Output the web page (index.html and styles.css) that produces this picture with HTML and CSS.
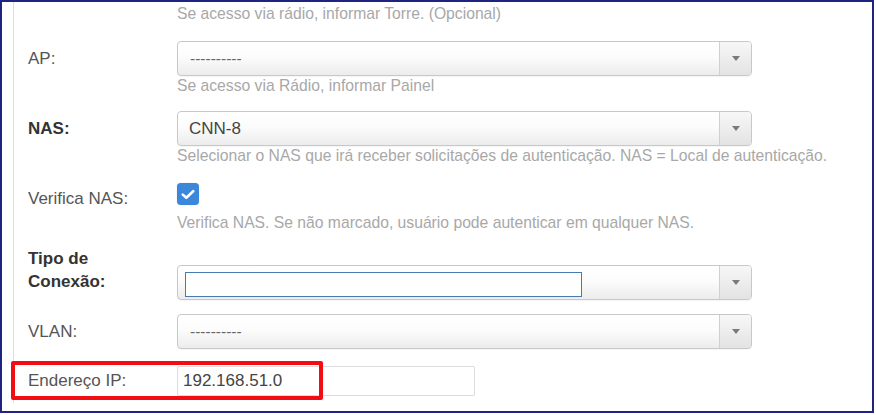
FILE: index.html
```html
<!DOCTYPE html>
<html lang="pt-BR">
<head>
<meta charset="utf-8">
<title>Formulário</title>
<link rel="stylesheet" href="styles.css">
</head>
<body>
<div class="frame">
  <div class="panel">
    <div class="field field-top">
      <div class="lbl"></div>
      <div class="ctl"><div class="help">Se acesso via rádio, informar Torre. (Opcional)</div></div>
    </div>

    <div class="field field-ap">
      <div class="lbl">AP:</div>
      <div class="ctl">
        <div class="select"><span class="select-text dashes">----------</span><span class="select-arrow"></span></div>
        <div class="help">Se acesso via Rádio, informar Painel</div>
      </div>
    </div>

    <div class="field field-nas">
      <div class="lbl bold">NAS:</div>
      <div class="ctl">
        <div class="select"><span class="select-text">CNN-8</span><span class="select-arrow"></span></div>
        <div class="help">Selecionar o NAS que irá receber solicitações de autenticação. NAS = Local de autenticação.</div>
      </div>
    </div>

    <div class="field field-check">
      <div class="lbl lbl-check">Verifica NAS:</div>
      <div class="ctl">
        <span class="checkbox"><svg width="14" height="11" viewBox="0 0 14 11"><path d="M1.8 5.6 L5.3 8.8 L12.2 2.2" fill="none" stroke="#fff" stroke-width="2.6" stroke-linecap="round" stroke-linejoin="round"/></svg></span>
        <div class="help help-check">Verifica NAS. Se não marcado, usuário pode autenticar em qualquer NAS.</div>
      </div>
    </div>

    <div class="field field-tipo">
      <div class="lbl bold lbl-two">Tipo de<br>Conexão:</div>
      <div class="ctl">
        <div class="select"><span class="inner-input"></span><span class="select-fill"></span><span class="select-arrow"></span></div>
      </div>
    </div>

    <div class="field field-vlan">
      <div class="lbl">VLAN:</div>
      <div class="ctl">
        <div class="select"><span class="select-text dashes">----------</span><span class="select-arrow"></span></div>
      </div>
    </div>

    <div class="field field-ip">
      <div class="lbl lbl-ip">Endereço IP:</div>
      <div class="ctl">
        <div class="text-input">192.168.51.0</div>
      </div>
    </div>
  </div>
  <div class="highlight"></div>
</div>
</body>
</html>
```

FILE: styles.css
```css
html, body {
  margin: 0;
  padding: 0;
  background: #ffffff;
}

body {
  font-family: "Liberation Sans", Arial, sans-serif;
  color: #555;
}

.frame {
  position: relative;
  box-sizing: border-box;
  width: 874px;
  height: 413px;
  border: 2px solid #1f2382;
  background: #ffffff;
  overflow: hidden;
}

.panel {
  margin-left: 11px;
  border-left: 1px solid #dcdcdc;
  padding-left: 14px;
  padding-top: 3px;
  height: 398px;
}

.field {
  display: flex;
  align-items: flex-start;
}

.lbl {
  flex: none;
  width: 149px;
  height: 35px;
  line-height: 35px;
  font-size: 17px;
  color: #555;
  white-space: nowrap;
}

.lbl.bold {
  font-weight: bold;
  color: #333;
}

.ctl {
  flex: none;
  display: flex;
  flex-direction: column;
  align-items: flex-start;
}

.help {
  font-size: 15.7px;
  line-height: 18px;
  color: #a8a8a8;
  margin-top: 1px;
  white-space: nowrap;
}

.field-top .lbl {
  height: 18px;
}

.field-top .help {
  margin-top: 0;
}

.field-ap {
  margin-top: 18px;
}

.field-nas {
  margin-top: 16px;
}

.field-check {
  margin-top: 18px;
}

.lbl-check {
  height: 22px;
  line-height: 22px;
  padding-top: 5px;
}

.help-check {
  margin-top: 9px;
}

.field-tipo {
  margin-top: 33px;
}

.lbl-two {
  height: auto;
  line-height: 23px;
  margin-top: -18px;
}

.field-vlan {
  margin-top: 14px;
}

.field-ip {
  margin-top: 17px;
}

.lbl-ip {
  height: 30px;
  line-height: 30px;
}

.select {
  box-sizing: border-box;
  width: 575px;
  height: 35px;
  border: 1px solid #c8c8c8;
  border-radius: 4px;
  background: linear-gradient(#ffffff 0%, #fcfcfc 45%, #ececec 100%);
  display: flex;
  align-items: center;
  box-shadow: 0 1px 1px rgba(0, 0, 0, 0.04);
}

.select-text {
  flex: 1;
  padding-left: 11px;
  font-size: 17px;
  color: #444;
  white-space: nowrap;
}

.select-text.dashes {
  font-size: 15.5px;
  color: #666;
  padding-left: 12px;
}

.select-fill {
  flex: 1;
}

.select-arrow {
  flex: none;
  align-self: stretch;
  width: 31px;
  border-left: 1px solid #d0d0d0;
  border-radius: 0 3px 3px 0;
  background: linear-gradient(#f7f7f7, #e3e3e3);
  display: flex;
  align-items: center;
  justify-content: center;
}

.select-arrow::after {
  content: "";
  width: 0;
  height: 0;
  border-top: 5px solid #7a7a7a;
  border-left: 4px solid transparent;
  border-right: 4px solid transparent;
}

.inner-input {
  flex: none;
  box-sizing: border-box;
  width: 397px;
  height: 25px;
  margin-left: 7px;
  margin-top: 4px;
  border: 1px solid #4a78b0;
  background: #ffffff;
}

.checkbox {
  box-sizing: border-box;
  width: 22px;
  height: 22px;
  border-radius: 4px;
  background: #3a87dc;
  display: flex;
  align-items: center;
  justify-content: center;
  box-shadow: 0 0 1px rgba(0, 0, 0, 0.3);
}

.text-input {
  box-sizing: border-box;
  width: 298px;
  height: 30px;
  line-height: 28px;
  border: 1px solid #dcdcdc;
  border-radius: 2px;
  padding-left: 5px;
  font-size: 17px;
  color: #444;
}

.highlight {
  position: absolute;
  left: 9px;
  top: 359px;
  box-sizing: border-box;
  width: 312px;
  height: 39px;
  border: 4px solid #f20d12;
  border-radius: 2px;
}
```
